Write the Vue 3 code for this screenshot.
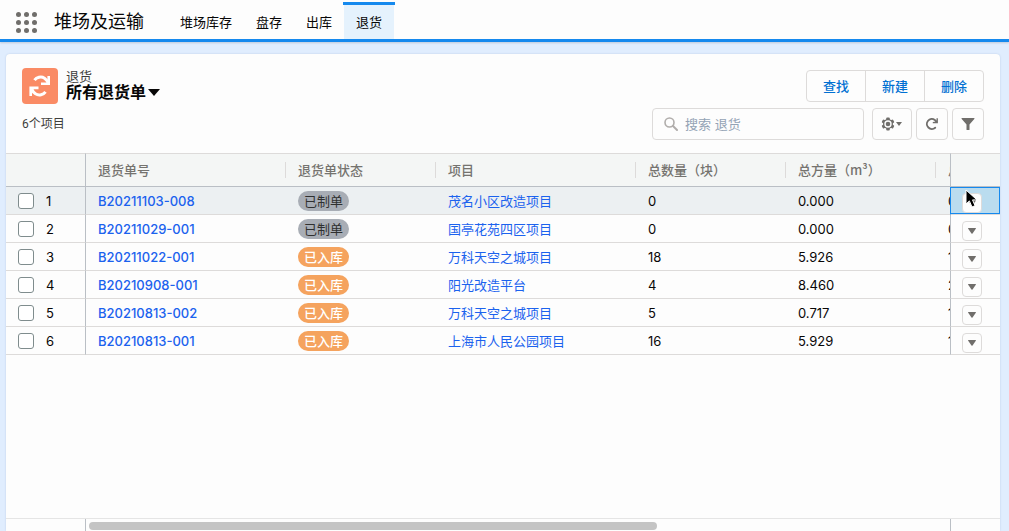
<script setup>
import { ref } from 'vue'

const tabs = ['堆场库存', '盘存', '出库', '退货']
const actions = ['查找', '新建', '删除']
const columns = ['退货单号', '退货单状态', '项目', '总数量（块）', '总方量（m³）', '总']
const keyword = ref('')
const rows = [
  { no: 'B20211103-008', status: '已制单', project: '茂名小区改造项目', count: '0', volume: '0.000', total: '0' },
  { no: 'B20211029-001', status: '已制单', project: '国亭花苑四区项目', count: '0', volume: '0.000', total: '0' },
  { no: 'B20211022-001', status: '已入库', project: '万科天空之城项目', count: '18', volume: '5.926', total: '1' },
  { no: 'B20210908-001', status: '已入库', project: '阳光改造平台', count: '4', volume: '8.460', total: '2' },
  { no: 'B20210813-002', status: '已入库', project: '万科天空之城项目', count: '5', volume: '0.717', total: '1' },
  { no: 'B20210813-001', status: '已入库', project: '上海市人民公园项目', count: '16', volume: '5.929', total: '1' },
]
</script>

<template>
  <div class="page">
    <header class="topbar">
      <button class="launcher" aria-label="应用">
        <i v-for="n in 9" :key="n"></i>
      </button>
      <h1 class="app-name">堆场及运输</h1>
      <nav class="tabs">
        <a v-for="t in tabs" :key="t" href="#" class="tab" :class="{ active: t === '退货' }">{{ t }}</a>
      </nav>
    </header>

    <main class="card">
      <div class="list-head">
        <div class="head-row">
          <div class="entity">
            <span class="entity-icon">
              <svg width="36" height="36" viewBox="0 0 36 36" fill="none" stroke="#fff" stroke-width="3">
                <path d="M12.5 12.2C14.5 9.4 19 8 22.5 10.2C24 11.2 25.5 12.8 26.2 15" />
                <path d="M26.7 8V15.7H19" stroke-width="2.6" />
                <path d="M23.5 23.8C21.5 26.6 17 28 13.5 25.8C12 24.8 10.5 23.2 9.8 21" />
                <path d="M8.7 28V19.9H16.5" stroke-width="2.6" />
              </svg>
            </span>
            <div class="entity-text">
              <span class="entity-label">退货</span>
              <button class="view-picker">
                所有退货单
                <svg width="12" height="7" viewBox="0 0 12 7"><path d="M0 0H12L6 7Z" fill="#080707" /></svg>
              </button>
            </div>
          </div>
          <div class="btn-group">
            <button v-for="a in actions" :key="a">{{ a }}</button>
          </div>
        </div>
        <div class="head-row">
          <span class="summary">6个项目</span>
          <div class="tools">
            <label class="search">
              <svg width="14" height="14" viewBox="0 0 14 14" fill="none" stroke="#b0adab">
                <circle cx="5.5" cy="5.5" r="4.5" stroke-width="1.6" />
                <path d="M9 9L13 13" stroke-width="2" stroke-linecap="round" />
              </svg>
              <input v-model="keyword" type="text" placeholder="搜索 退货" aria-label="搜索 退货" />
            </label>
            <button class="tool wide" aria-label="设置">
              <svg width="22" height="14" viewBox="0 0 22 14">
                <g fill="#706e6b">
                  <rect v-for="a in [0, 60, 120]" :key="a" x="5.2" y="0.5" width="3.6" height="13" rx="1" :transform="`rotate(${a} 7 7)`" />
                  <circle cx="7" cy="7" r="5" />
                </g>
                <circle cx="7" cy="7" r="3" fill="none" stroke="#fdfdfd" stroke-width="1.4" />
                <path d="M15 5H21L18 9Z" fill="#706e6b" />
              </svg>
            </button>
            <button class="tool" aria-label="刷新">
              <svg width="14" height="14" viewBox="0 0 14 14">
                <path d="M10.2 10.7A5 5 0 1 1 9.8 2.9L11.3 4.5" fill="none" stroke="#706e6b" stroke-width="1.9" stroke-linecap="round" />
                <path d="M12.9 1.2V6.3H7.8V5L11.5 4.6V1.2Z" fill="#706e6b" />
              </svg>
            </button>
            <button class="tool" aria-label="筛选">
              <svg width="14" height="14" viewBox="0 0 14 14">
                <path d="M1 1H13Q14 1 13.3 2L8.5 7.5V12.5Q8.5 13 8 13H6Q5.5 13 5.5 12.5V7.5L0.7 2Q0 1 1 1Z" fill="#706e6b" />
              </svg>
            </button>
          </div>
        </div>
      </div>

      <div class="grid-wrap">
        <table>
          <colgroup>
            <col class="c-select" /><col class="c-wide" /><col class="c-mid" /><col class="c-wide" />
            <col class="c-mid" /><col class="c-mid" /><col class="c-mid" /><col class="c-menu" />
          </colgroup>
          <thead>
            <tr>
              <th class="select-cell"></th>
              <th v-for="c in columns" :key="c"><span class="th-text">{{ c }}</span></th>
              <th class="menu-cell"></th>
            </tr>
          </thead>
          <tbody>
            <tr v-for="(r, i) in rows" :key="r.no" :class="{ hover: i === 0 }">
              <td class="select-cell">
                <label class="pick"><input type="checkbox" />{{ i + 1 }}</label>
              </td>
              <td><a href="#" class="doc-no">{{ r.no }}</a></td>
              <td><span class="pill" :class="{ done: r.status === '已入库' }">{{ r.status }}</span></td>
              <td><a href="#">{{ r.project }}</a></td>
              <td>{{ r.count }}</td>
              <td>{{ r.volume }}</td>
              <td>{{ r.total }}</td>
              <td class="menu-cell">
                <button class="row-menu" aria-label="操作">
                  <svg width="8" height="6" viewBox="0 0 8 6"><path d="M0.5 0H7.5Q8.3 0 7.8 0.8L4.5 5.5Q4 6 3.5 5.5L0.2 0.8Q-0.3 0 0.5 0Z" fill="#706e6b" /></svg>
                </button>
                <svg v-if="i === 0" class="pointer" width="14" height="20" viewBox="0 0 14 20">
                  <path d="M1 1V15L4.4 11.9L7 18L10 16.7L7.5 10.9H12Z" fill="#000" stroke="#fff" stroke-width="1" stroke-linejoin="round" />
                </svg>
              </td>
            </tr>
          </tbody>
        </table>
      </div>

      <div class="scroll-row">
        <div class="scroll-left"></div>
        <div class="scroll-track"><div class="thumb"></div></div>
        <div class="scroll-right"></div>
      </div>
    </main>
  </div>
</template>

<style>
body {
  background: #e0edfe;
}
</style>

<style scoped>
* {
  box-sizing: border-box;
}
.page {
  min-height: 100vh;
  display: flex;
  flex-direction: column;
  font-family: Inter, "Noto Sans CJK SC", sans-serif;
  font-size: 13px;
  line-height: 20px;
  color: #080707;
}
button,
input {
  font: inherit;
  color: inherit;
  margin: 0;
}
button {
  padding: 0;
  background: none;
  border: 0;
}
svg {
  display: block;
}
a {
  text-decoration: none;
  color: #1b62ee;
}
.topbar {
  display: flex;
  align-items: center;
  height: 42px;
  padding-left: 16px;
  background: #fdfdfd;
  border-bottom: 3px solid #1589ee;
  box-shadow: 0 1px 2px rgba(0, 0, 0, 0.15);
}
.launcher {
  display: grid;
  grid-template-columns: repeat(3, 5px);
  gap: 3px;
  margin-top: 6px;
}
.launcher i {
  width: 5px;
  height: 5px;
  border-radius: 50%;
  background: #706e6b;
}
.app-name {
  margin: 5px 24px 0 17px;
  font-size: 18px;
  font-weight: 400;
  line-height: 28px;
}
.tabs {
  display: flex;
  align-self: stretch;
}
.tab {
  position: relative;
  padding: 10px 12px 0;
  margin-top: 2px;
  color: #080707;
}
.tab.active {
  background: #e5f2fd;
}
.tab.active::before {
  content: "";
  position: absolute;
  inset: 0 -1px auto;
  height: 3px;
  background: #1589ee;
}
.card {
  flex: 1;
  display: flex;
  flex-direction: column;
  margin: 12px 9px 0 6px;
  background: #fdfdfd;
  border-radius: 4px 4px 0 0;
  box-shadow: 0 0 2px rgba(0, 60, 120, 0.18);
  min-width: 0;
}
.list-head {
  display: flex;
  flex-direction: column;
  gap: 4px;
  padding: 14px 16px 13px;
}
.head-row,
.entity,
.tools {
  display: flex;
  align-items: center;
}
.head-row {
  justify-content: space-between;
}
.entity {
  gap: 8px;
}
.entity-icon {
  width: 36px;
  height: 36px;
  border-radius: 4px;
  background: #fa8b65;
}
.entity-text {
  display: flex;
  flex-direction: column;
  align-self: flex-start;
}
.entity-label {
  line-height: 16px;
  color: #3e3e3c;
}
.view-picker {
  display: flex;
  align-items: center;
  gap: 2px;
  font-size: 16px;
  font-weight: 700;
  line-height: 16px;
}
.btn-group {
  display: flex;
  border: 1px solid #dddbda;
  border-radius: 4px;
}
.btn-group button {
  height: 30px;
  padding: 0 16px;
  color: #0070d2;
  font-weight: 500;
}
.btn-group button + button {
  border-left: 1px solid #dddbda;
}
.summary {
  font-family: Roboto, "Noto Sans CJK SC", sans-serif;
  font-size: 12px;
  color: #3e3e3c;
}
.tools {
  gap: 4px;
}
.search {
  display: flex;
  align-items: center;
  gap: 7px;
  width: 212px;
  height: 32px;
  margin-right: 4px;
  padding: 0 11px;
  border: 1px solid #dddbda;
  border-radius: 4px;
}
.search input {
  flex: 1;
  min-width: 0;
  padding: 0;
  border: 0;
  outline: 0;
  background: none;
}
.search input::placeholder {
  color: #94a3b5;
  opacity: 1;
}
.tool {
  display: flex;
  align-items: center;
  justify-content: center;
  width: 32px;
  height: 32px;
  border: 1px solid #dddbda;
  border-radius: 4px;
}
.tool.wide {
  width: 40px;
}
.grid-wrap {
  flex: 1;
  overflow: hidden;
}
table {
  width: 1130px;
  table-layout: fixed;
  border-collapse: separate;
  border-spacing: 0;
}
.c-select {
  width: 80px;
}
.c-wide {
  width: 200px;
}
.c-mid {
  width: 150px;
}
.c-menu {
  width: 50px;
}
th {
  height: 34px;
  padding: 0;
  background: #f4f6f5;
  border-top: 1px solid #dddbda;
  border-bottom: 1px solid #babfc5;
  font-family: "Noto Sans CJK SC", sans-serif;
  font-weight: 500;
  text-align: left;
  color: #75736f;
}
.th-text {
  display: block;
  padding-left: 12px;
  line-height: 16px;
  white-space: nowrap;
}
th + th + th .th-text {
  margin-left: -1px;
  border-left: 1px solid #dddbda;
}
td {
  height: 28px;
  padding: 0 12px;
  background: #fdfdfd;
  border-bottom: 1px solid #dddbda;
  white-space: nowrap;
}
.hover td {
  background: #ecf0f2;
}
.doc-no {
  font-weight: 500;
}
.select-cell {
  border-right: 1px solid #babfc5;
}
.pick {
  display: flex;
  align-items: center;
  gap: 12px;
}
.pick input {
  appearance: none;
  width: 16px;
  height: 16px;
  border: 1px solid #7f8c8d;
  border-radius: 3px;
  background: #fff;
}
.pill {
  display: block;
  width: max-content;
  padding: 0 6px;
  border-radius: 10px;
  background: #a8adb5;
  color: #2f3030;
}
.pill.done {
  background: #f5a35e;
  color: #fff;
  font-weight: 500;
}
.menu-cell {
  position: sticky;
  right: 0;
  padding: 6px 0 0 11px;
  border-left: 1px solid #babfc5;
  vertical-align: top;
}
.row-menu {
  display: flex;
  align-items: center;
  justify-content: center;
  width: 20px;
  height: 20px;
  border: 1px solid #dddbda;
  border-radius: 4px;
  background: #fdfdfd;
}
.hover .menu-cell {
  background: #badcef;
  border-left-color: #1589ee;
  box-shadow: inset 0 1px #1589ee, inset -1px -1px #1589ee;
}
.pointer {
  position: absolute;
  left: 14px;
  top: 2px;
}
.scroll-row {
  display: flex;
  height: 13px;
  border-top: 1px solid #e5e5e5;
}
.scroll-left {
  width: 80px;
  border-right: 1px solid #babfc5;
}
.scroll-track {
  flex: 1;
  padding: 3px;
}
.thumb {
  width: 66.2%;
  height: 8px;
  border-radius: 4px;
  background: #c4c4c4;
}
.scroll-right {
  width: 50px;
  border-left: 1px solid #babfc5;
}
</style>
